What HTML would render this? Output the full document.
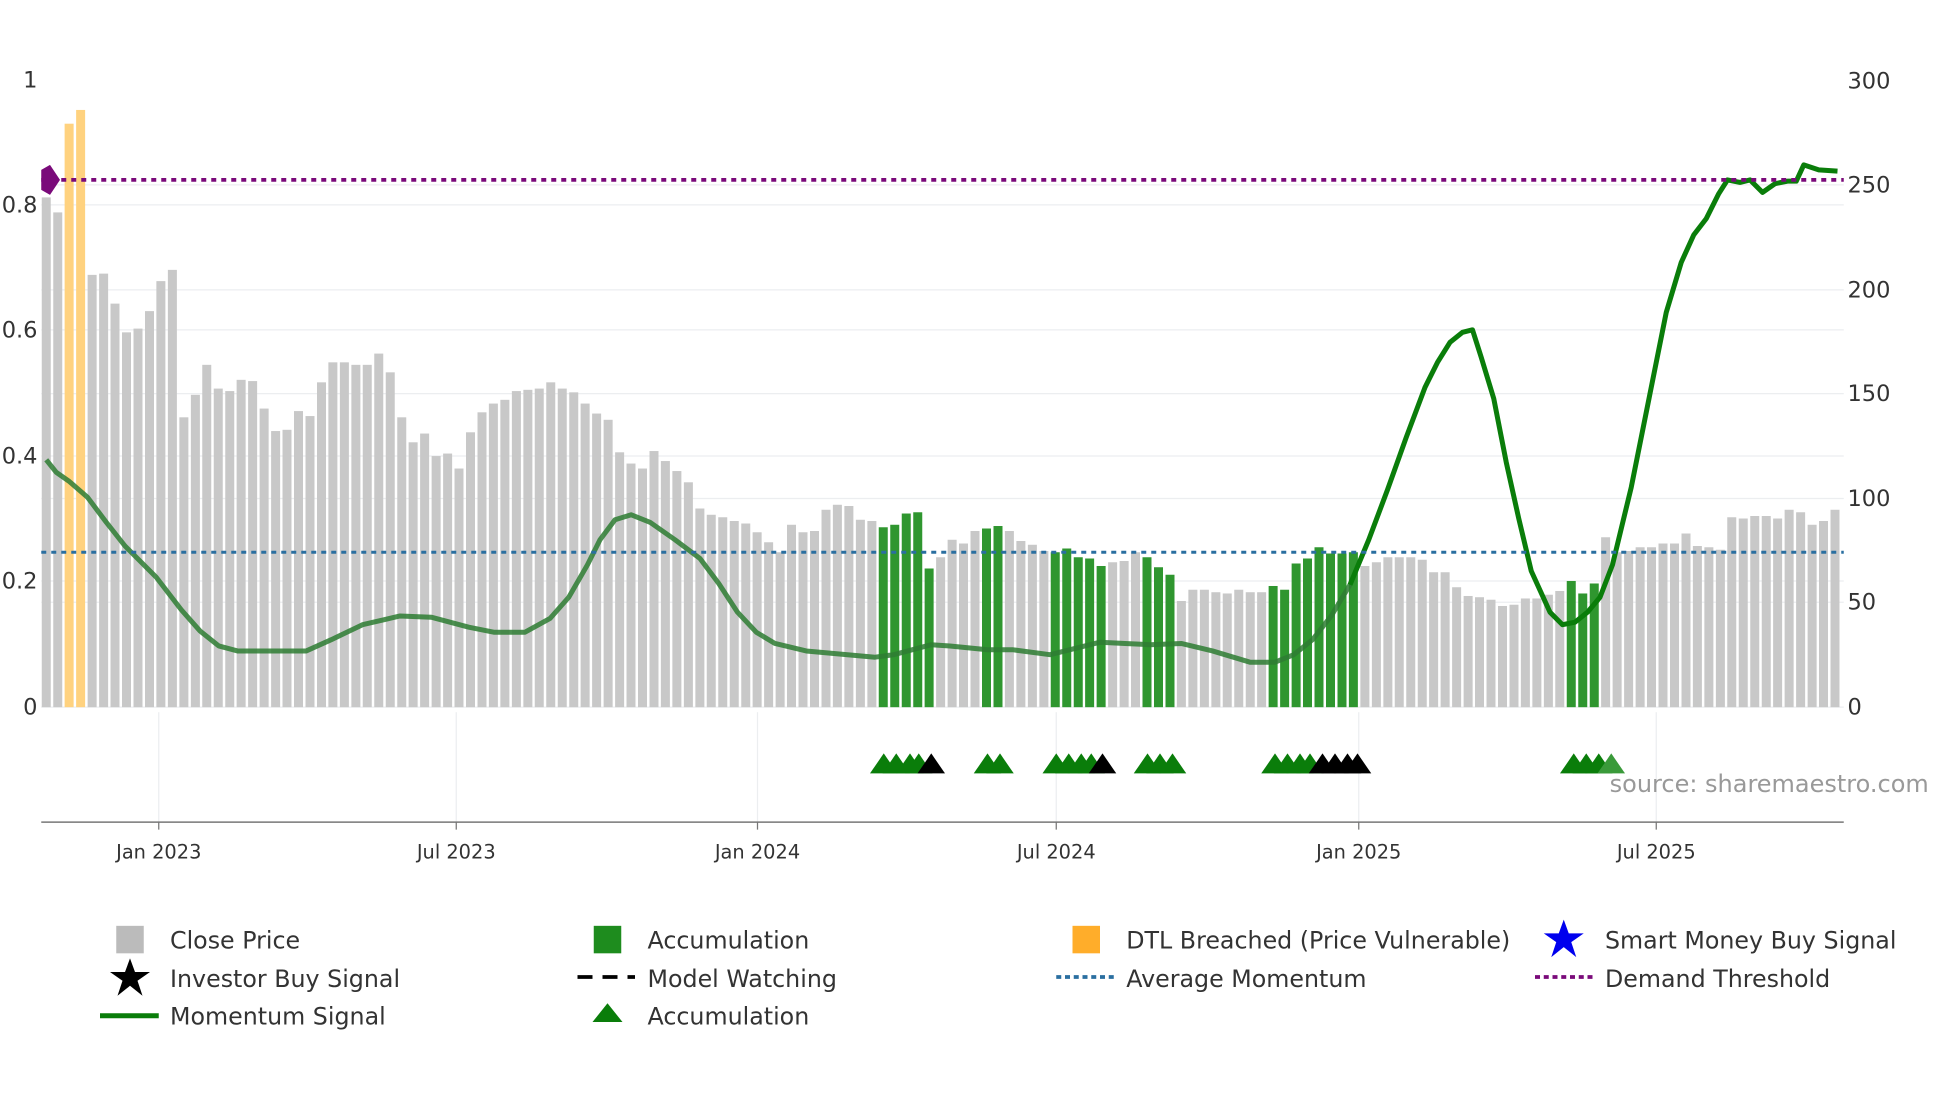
<!DOCTYPE html>
<html><head><meta charset="utf-8"><style>
html,body{margin:0;padding:0;background:#fff;}
svg{display:block;font-family:"DejaVu Sans","Liberation Sans",sans-serif;}
</style></head><body>
<svg id="s" width="1960" height="1102" viewBox="0 0 1568 882" preserveAspectRatio="none" xmlns="http://www.w3.org/2000/svg">
<rect width="1568" height="882" fill="#fff"/>
<g stroke="#eceef0" stroke-width="1">
<line x1="33" x2="1475" y1="164" y2="164"/><line x1="33" x2="1475" y1="264" y2="264"/><line x1="33" x2="1475" y1="365" y2="365"/><line x1="33" x2="1475" y1="465" y2="465"/>
<line x1="33" x2="1475" y1="148" y2="148"/><line x1="33" x2="1475" y1="232" y2="232"/><line x1="33" x2="1475" y1="315" y2="315"/><line x1="33" x2="1475" y1="399" y2="399"/><line x1="33" x2="1475" y1="482" y2="482"/>
<line x1="33" x2="1475" y1="566" y2="566"/>
<line x1="127" x2="127" y1="570" y2="658"/><line x1="365" x2="365" y1="570" y2="658"/><line x1="606" x2="606" y1="570" y2="658"/><line x1="845" x2="845" y1="570" y2="658"/><line x1="1087" x2="1087" y1="570" y2="658"/><line x1="1325" x2="1325" y1="570" y2="658"/>
</g>
<g id="bars"></g>
<polyline id="mom1" fill="none" stroke="#2e7d32" stroke-opacity="0.85" stroke-width="4" stroke-linejoin="round"/>
<polyline id="mom2" fill="none" stroke="#0a7d0a" stroke-width="4" stroke-linejoin="round"/>
<line x1="33" x2="1475" y1="144" y2="144" stroke="#7a0a7a" stroke-width="3" stroke-dasharray="4,4"/>
<line x1="33" x2="1475" y1="442" y2="442" stroke="#2a6fa0" stroke-width="2.5" stroke-dasharray="4,4"/>
<path d="M40 132 L48 144 L40 156 L33 152 L33 136 Z" fill="#7a0a7a"/>
<g id="tri"></g>
<line x1="33" x2="1475" y1="658" y2="658" stroke="#777" stroke-width="1.2"/>
<g stroke="#777"><line x1="127" x2="127" y1="658" y2="664"/><line x1="365" x2="365" y1="658" y2="664"/><line x1="606" x2="606" y1="658" y2="664"/><line x1="845" x2="845" y1="658" y2="664"/><line x1="1087" x2="1087" y1="658" y2="664"/><line x1="1325" x2="1325" y1="658" y2="664"/></g>
<g font-size="15.5" fill="#333" text-anchor="middle">
<text x="127" y="687">Jan 2023</text><text x="365" y="687">Jul 2023</text><text x="606" y="687">Jan 2024</text><text x="845" y="687">Jul 2024</text><text x="1087" y="687">Jan 2025</text><text x="1325" y="687">Jul 2025</text>
</g>
<g font-size="18" fill="#333" text-anchor="end">
<text x="30" y="70">1</text><text x="30" y="170">0.8</text><text x="30" y="270">0.6</text><text x="30" y="371">0.4</text><text x="30" y="471">0.2</text><text x="30" y="572">0</text>
</g>
<g font-size="18" fill="#333">
<text x="1478" y="71">300</text><text x="1478" y="154">250</text><text x="1478" y="238">200</text><text x="1478" y="321">150</text><text x="1478" y="405">100</text><text x="1478" y="488">50</text><text x="1478" y="572">0</text>
</g>
<text x="1543" y="634" font-size="19.2" fill="#999" text-anchor="end">source: sharemaestro.com</text>
<g font-size="19" fill="#333">
<rect x="93" y="741" width="22" height="22" fill="#bbb"/><text x="136" y="759">Close Price</text>
<rect x="475" y="741" width="22" height="22" fill="#1e8c1e"/><text x="518" y="759">Accumulation</text>
<rect x="858" y="741" width="22" height="22" fill="#ffad2a"/><text x="901" y="759">DTL Breached (Price Vulnerable)</text>
<polygon points="1251,736 1255,747 1267,747 1257,754 1261,766 1251,758 1241,766 1245,754 1235,747 1247,747" fill="#0000ee"/><text x="1284" y="759">Smart Money Buy Signal</text>
<polygon points="104,767 108,778 120,778 110,785 114,797 104,789 94,797 98,785 88,778 100,778" fill="#000"/><text x="136" y="790">Investor Buy Signal</text>
<line x1="462" x2="508" y1="782" y2="782" stroke="#000" stroke-width="3" stroke-dasharray="12,8"/><text x="518" y="790">Model Watching</text>
<line x1="845" x2="891" y1="782" y2="782" stroke="#2a6fa0" stroke-width="3" stroke-dasharray="4,3"/><text x="901" y="790">Average Momentum</text>
<line x1="1228" x2="1274" y1="782" y2="782" stroke="#7a0a7a" stroke-width="3" stroke-dasharray="4,3"/><text x="1284" y="790">Demand Threshold</text>
<line x1="80" x2="127" y1="813" y2="813" stroke="#0a7d0a" stroke-width="4"/><text x="136" y="820">Momentum Signal</text>
<polygon points="486,803 498,818 474,818" fill="#0a7d0a"/><text x="518" y="820">Accumulation</text>
</g>
</svg>
<script>
var tops=[158,170,99,88,220,219,243,266,263,249,225,216,334,316,292,311,313,304,305,327,345,344,329,333,306,290,290,292,292,283,298,334,354,347,365,363,375,346,330,323,320,313,312,311,306,311,314,323,331,336,362,371,375,361,369,377,386,407,412,414,417,419,426,434,442,420,426,425,408,404,405,416,417,422,420,411,410,455,446,432,435,425,423,421,425,433,436,441,442,439,446,447,453,450,449,442,446,454,460,481,472,472,474,475,472,474,474,469,472,451,447,438,443,443,442,453,450,446,446,446,448,458,458,470,477,478,480,485,484,479,479,476,473,465,475,467,430,442,441,438,438,435,435,427,437,438,440,414,415,413,413,415,408,410,420,417,408];
var n=tops.length,g=document.getElementById('bars'),h='';
var step=(1468-37)/(n-1);
for(var i=0;i<n;i++){var x=37+i*step;var c='#c8c8c8';
 if(i==2||i==3)c='#ffd27f';
 if((x>=702&&x<=748)||(x>=786&&x<=801)||(x>=841&&x<=883)||(x>=914&&x<=938)||(x>=1014&&x<=1084)||(x>=1251&&x<=1284))c='#2f962f';
 h+='<rect x="'+(x-3.6).toFixed(1)+'" y="'+tops[i]+'" width="7.2" height="'+(566-tops[i])+'" fill="'+c+'"/>';}
g.innerHTML=h;
var p=[[37,368],[45,378],[55,385],[70,398],[85,418],[100,437],[125,462],[145,488],[160,505],[175,517],[190,521],[245,521],[265,512],[290,500],[320,493],[345,494],[375,502],[395,506],[420,506],[440,495],[455,478],[470,452],[480,432],[492,416],[505,412],[520,418],[540,432],[560,447],[575,467],[590,490],[605,506],[620,515],[645,521],[700,526],[715,524],[745,516],[760,517],[790,520],[810,520],[840,524],[860,519],[880,514],[900,515],[920,516],[945,515],[970,521],[1000,530],[1020,530],[1035,524],[1050,512],[1065,493],[1080,468],[1095,432],[1110,392],[1125,350],[1140,310],[1150,290],[1160,274],[1170,266],[1178,264],[1185,286],[1195,319],[1205,370],[1215,415],[1225,457],[1240,490],[1250,500],[1260,498],[1270,490],[1280,478],[1290,452],[1305,390],[1320,315],[1333,250],[1345,210],[1355,188],[1365,175],[1375,155],[1382,144],[1392,146],[1400,144],[1410,154],[1420,147],[1430,145],[1437,145],[1443,132],[1455,136],[1470,137]];
var a=[],b=[];p.forEach(function(q){if(q[0]<=1080)a.push(q.join(','));if(q[0]>=1080)b.push(q.join(','));});
document.getElementById('mom1').setAttribute('points',a.join(' '));
document.getElementById('mom2').setAttribute('points',b.join(' '));
var tg=[[707,'#0a7d0a'],[717,'#0a7d0a'],[728,'#0a7d0a'],[735,'#0a7d0a'],[745,'#000'],[790,'#0a7d0a'],[800,'#0a7d0a'],[845,'#0a7d0a'],[855,'#0a7d0a'],[865,'#0a7d0a'],[873,'#0a7d0a'],[882,'#000'],[918,'#0a7d0a'],[928,'#0a7d0a'],[938,'#0a7d0a'],[1020,'#0a7d0a'],[1030,'#0a7d0a'],[1040,'#0a7d0a'],[1048,'#0a7d0a'],[1058,'#000'],[1068,'#000'],[1078,'#000'],[1086,'#000'],[1259,'#0a7d0a'],[1269,'#0a7d0a'],[1279,'#0a7d0a'],[1289,'#3a9a3a']];
var t='';tg.forEach(function(q){t+='<polygon points="'+(q[0]-11)+',619 '+q[0]+',603 '+(q[0]+11)+',619" fill="'+q[1]+'"/>';});
document.getElementById('tri').innerHTML=t;
</script>
</body></html>
